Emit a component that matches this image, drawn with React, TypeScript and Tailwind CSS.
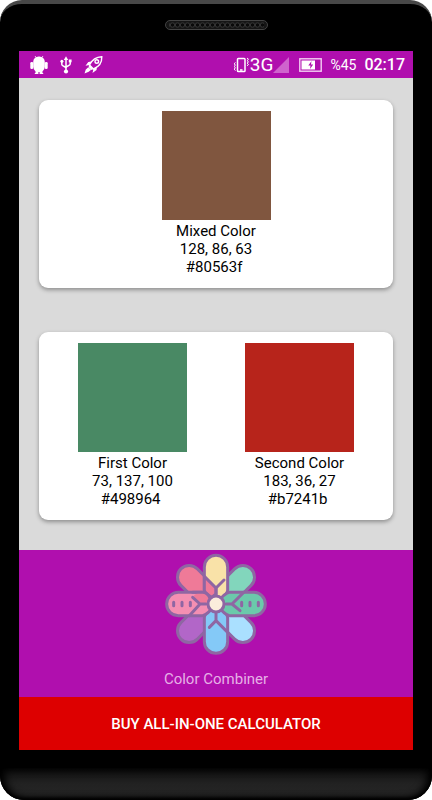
interface SwatchProps {
  label: string;
  rgb: string;
  hex: string;
  color: string;
}

function Swatch({ label, rgb, hex, color }: SwatchProps) {
  return (
    <div className="flex flex-1 flex-col items-center text-[15px] leading-[18px] text-black">
      <div className="mb-0.5 h-[109px] w-[109px]" style={{ backgroundColor: color }} />
      <div>{label}</div>
      <div>{rgb}</div>
      <div className="whitespace-pre">{hex + " "}</div>
    </div>
  );
}

function Speaker() {
  return (
    <svg viewBox="0 0 103 10" className="h-2.5 w-[103px]">
      <defs>
        <pattern id="grille" width="5" height="10" patternUnits="userSpaceOnUse">
          <circle cx="2.500" cy="5" r="2.200" fill="#0a0a0a" stroke="#3c3c3c" strokeWidth="0.800" />
        </pattern>
      </defs>
      <rect x="0.5" y="0.5" width="102" height="9" rx="4.500" fill="#161616" stroke="#444" />
      <rect x="4" y="1" width="95" height="8" fill="url(#grille)" />
    </svg>
  );
}

function AndroidIcon() {
  return (
    <svg viewBox="0 0 18 20" className="h-5 w-[18px] shrink-0" fill="#fff">
      <path d="M5 1l1.500 2M13 1l-1.500 2" stroke="#fff" strokeWidth="0.8" />
      <rect x="3.200" y="1.500" width="11.600" height="15.500" rx="5.500" />
      <path d="M5.500 15h2.900v4H4.800v-1h.7zM9.600 15h2.900v3h.7v1H9.600z" />
      <rect x="0.300" y="7" width="2.900" height="7" rx="1.300" />
      <rect x="14.800" y="7" width="2.900" height="7" rx="1.300" />
    </svg>
  );
}

function UsbIcon() {
  return (
    <svg viewBox="0 0 12 18" className="h-[18px] w-3 shrink-0" fill="none" stroke="#fff" strokeWidth="1.500">
      <path d="M6 3v12M1.800 6v2.500c0 2 4.200 1.500 4.200 4M10.200 5v3c0 2-4.200 1.500-4.200 4" />
      <path d="M6 .3L8.200 4H3.800z" fill="#fff" stroke="none" />
      <circle cx="6" cy="15.500" r="2.100" fill="#fff" stroke="none" />
      <circle cx="1.900" cy="5.300" r="1.500" fill="#fff" stroke="none" />
      <rect x="8.800" y="3.500" width="2.800" height="2.800" fill="#fff" stroke="none" />
    </svg>
  );
}

function RocketIcon() {
  return (
    <svg viewBox="0 0 19 18" className="h-[18px] w-[19px] shrink-0" fill="none" stroke="#fff" strokeWidth="1.400">
      <path d="M5.500 9C8 4 12 1 17.800.8 18 6.500 15 10.800 9.500 13z" />
      <circle cx="12.800" cy="5.500" r="1.800" />
      <path d="M7.500 5.500L4.300 6 1.500 9.800 5.500 9zM13 10.500l-.5 3.500-4 3 1-4.200zM5.500 9l4 4-2 1-3-3z" fill="#fff" stroke="none" />
      <path d="M4.300 11.300L1.800 13.500.5 17.500l4.200-1.700 2.500-2z" fill="#fff" stroke="none" />
    </svg>
  );
}

function VibrateIcon() {
  return (
    <svg viewBox="0 0 17 16" className="h-4 w-[17px] shrink-0" fill="none" stroke="#fff">
      <rect x="4.500" y="1.500" width="7.500" height="13" rx="0.800" strokeWidth="1.500" />
      <path d="M7 13h2.500" strokeWidth="1.500" />
      <path d="M2.500 5.500L1 6.800l1.500 1.300L1 9.500l1.500 1.300L1 12.200l1.500 1.300M14 1l1.500 1.300L14 3.600l1.500 1.300L14 6.200l1.500 1.300L14 8.800" />
    </svg>
  );
}

function SignalIcon() {
  return (
    <svg viewBox="0 0 16 16" className="h-4 w-4 shrink-0">
      <path d="M16 0v16H0z" fill="#cf63cd" />
    </svg>
  );
}

function BatteryIcon() {
  return (
    <svg viewBox="0 0 23 14" className="h-3.5 w-[23px] shrink-0">
      <rect x="0.800" y="0.800" width="21.400" height="12.400" fill="none" stroke="#f3d0f3" strokeWidth="1.400" />
      <rect x="2.500" y="2.500" width="13.500" height="9" fill="#fff" />
      <path d="M12.500 3L9.300 7.500h2.200L11 11l3.200-4.500H12z" fill="#b00fae" />
    </svg>
  );
}

function FlowerLogo() {
  return (
    <svg viewBox="42 22 312 312" className="h-[104px] w-[104px]">
      <g stroke="#8f66a3" strokeWidth="9" strokeLinecap="round" strokeLinejoin="round">
        <rect x="163" y="29" width="70" height="149" rx="35" fill="#ef7a98" transform="rotate(-45 198 178)" />
        <rect x="163" y="29" width="70" height="149" rx="35" fill="#82d6bc" transform="rotate(45 198 178)" />
        <rect x="163" y="29" width="70" height="149" rx="35" fill="#b266c8" transform="rotate(-135 198 178)" />
        <rect x="163" y="29" width="70" height="149" rx="35" fill="#aae0ff" transform="rotate(135 198 178)" />
        <path d="M163 137V67a35 35 0 0 1 70 0V137Q233 150 198 178Q163 150 163 137z" fill="#f9e2a8" />
        <path d="M163 219V291a35 35 0 0 0 70 0V219Q233 206 198 178Q163 206 163 219z" fill="#84c9f7" />
        <path d="M157 143H85a35 35 0 0 0 0 70H157Q170 213 198 178Q170 143 157 143z" fill="#f48fb2" />
        <path d="M239 143H311a35 35 0 0 1 0 70H239Q226 213 198 178Q226 143 239 143z" fill="#6bc9ab" />
        <path d="M163 95V137Q165 145 185 158L198 148V130z" fill="#ef7a98" />
        <path d="M128 158Q138 143 157 143Q172 143 180 160L170 178H150z" fill="#ef7a98" stroke="none" />
        <path d="M128 143H157Q172 143 180 160" fill="none" />
        <path d="M222 106L198 130V150M128 158L150 178H168M118 213L150 178M270 198L246 178H228M281 143L246 178M178 248L198 228V205M233 263L198 228" fill="none" />
        <circle cx="198" cy="178" r="24" fill="#fbecdc" />
        <path d="M71 173v10M96 173v10M121 173v10M275 173v10M300 173v10M325 173v10" />
      </g>
    </svg>
  );
}

export default function App() {
  return (
    <div className="min-h-screen bg-white font-[Roboto,sans-serif]">
      <div className="flex min-h-screen flex-col overflow-hidden rounded-t-[22px] rounded-b-[24px] border-t-4 border-[#484848] bg-black">
        <div className="flex h-[47px] shrink-0 justify-center pt-4">
          <Speaker />
        </div>

        <div className="mx-[19px] flex flex-1 flex-col bg-[#dadada]">
          {/* Status bar */}
          <header className="flex h-[27px] items-center bg-[#b00fae] pr-2 pl-[11px] text-white">
            <div className="flex items-center gap-3">
              <AndroidIcon />
              <UsbIcon />
              <RocketIcon />
            </div>
            <div className="ml-auto flex items-center">
              <VibrateIcon />
              <span className="text-[19px] leading-5">3G</span>
              <SignalIcon />
              <div className="ml-2.5 flex items-center gap-2">
                <BatteryIcon />
                <span className="text-sm">%45</span>
                <span className="text-base font-medium">02:17</span>
              </div>
            </div>
          </header>

          <main className="flex flex-1 flex-col gap-11 px-5 pt-[22px] pb-7">
            <section className="flex rounded-[9px] bg-white px-2.5 pt-[11px] pb-3 shadow-[0_2px_4px_rgba(0,0,0,0.35)]">
              <Swatch label="Mixed Color" rgb="128, 86, 63" hex="#80563f" color="#80563f" />
            </section>
            <section className="flex rounded-[9px] bg-white px-2.5 pt-[11px] pb-3 shadow-[0_2px_4px_rgba(0,0,0,0.35)]">
              <Swatch label="First Color" rgb="73, 137, 100" hex="#498964" color="#498964" />
              <Swatch label="Second Color" rgb="183, 36, 27" hex="#b7241b" color="#b7241b" />
            </section>
          </main>

          <div className="flex flex-col items-center bg-[#b00fae] pt-0.5 pb-2">
            <FlowerLogo />
            <div className="mt-[13px] text-[15px] leading-5 text-[#e6b0e6]">Color Combiner</div>
          </div>

          <button className="h-[53px] bg-[#dd0000] pt-0.5 text-[15px] font-medium text-white">
            BUY ALL-IN-ONE CALCULATOR
          </button>
        </div>

        <div className="mt-[18px] h-8 shrink-0 rounded-b-[24px] bg-linear-to-b from-[#101010] via-[#222222] to-[#262626] shadow-[inset_0_-2px_3px_#000,inset_5px_0_8px_#000,inset_-5px_0_8px_#000]" />
      </div>
    </div>
  );
}
